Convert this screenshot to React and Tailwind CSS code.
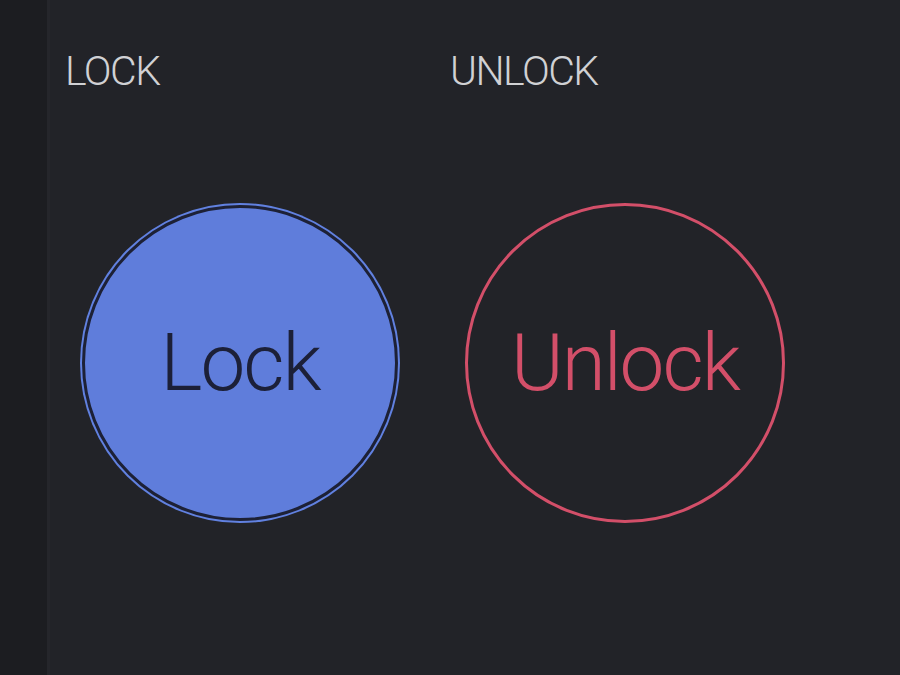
export default function App() {
  return (
    <div className="flex h-[675px] w-[900px] overflow-hidden bg-[#222328]" style={{ fontFamily: "Roboto, 'Liberation Sans', sans-serif" }}>
      {/* left rail */}
      <div className="w-[50px] shrink-0 bg-[#1c1d21] border-r-[3px] border-[#25262b]" />

      <div className="flex pt-[49px]">
        {/* LOCK */}
        <div className="w-[400px] pl-[15px]">
          <h2 className="text-[41px] leading-[44px] font-light tracking-[-1.5px] text-[#d0d1d4]">LOCK</h2>
          <div className="ml-[15px] mt-[110px] h-[320px] w-[320px] rounded-full bg-[#6181e0] p-[2px]">
            <div className="flex h-full w-full items-center justify-center rounded-full border-[3px] border-[#1d2136] bg-[#5f7ddb]">
              <span className="text-[80px] font-light tracking-[-2px] text-[#1c2038]">Lock</span>
            </div>
          </div>
        </div>

        {/* UNLOCK */}
        <div className="w-[385px]">
          <h2 className="text-[41px] leading-[44px] font-light tracking-[-1.5px] text-[#d0d1d4]">UNLOCK</h2>
          <div className="ml-[15px] mt-[110px] flex h-[320px] w-[320px] items-center justify-center rounded-full border-[3px] border-[#d34f69]">
            <span className="text-[80px] font-light tracking-[-2px] text-[#d34f69]">Unlock</span>
          </div>
        </div>
      </div>
    </div>
  );
}
